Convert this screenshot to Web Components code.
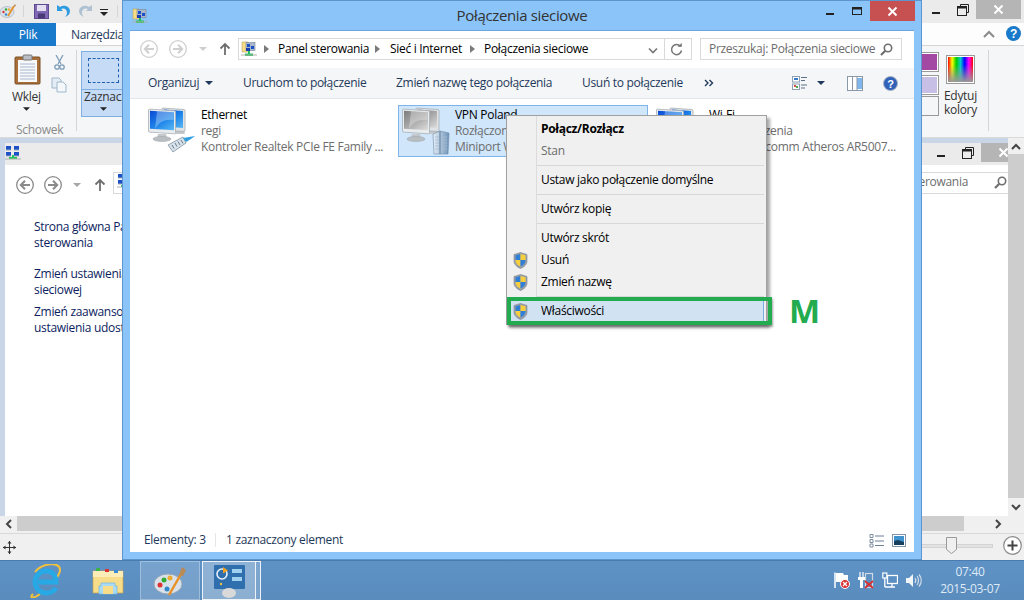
<!DOCTYPE html>
<html lang="pl"><head><meta charset="utf-8"><title>Połączenia sieciowe</title>
<style>html,body{margin:0;padding:0;overflow:hidden;background:#5f93c5}</style></head>
<body><x-desktop></x-desktop>
<script>
const FONT='"Open Sans","Noto Sans",sans-serif';
const base=`*{box-sizing:border-box}:host{font:12px/16px ${FONT};letter-spacing:-.3px}`;
function el(name,css,html){customElements.define(name,class extends HTMLElement{constructor(){super();const r=this.attachShadow({mode:'open'});r.innerHTML=`<style>${base}${css}</style>${typeof html==='function'?html(this):html}`;}});}

const I={
smallNet:(s=16)=>`<svg width="${s}" height="${s}" viewBox="0 0 16 16"><path d="M1 1h6l1 1v9H1z" fill="#f6dc86" stroke="#b9a45a" stroke-width=".6"/><rect x="5" y="1.500" width="9" height="8" fill="#a9b7c9" stroke="#77869a" stroke-width=".6"/><rect x="6" y="3" width="3" height="3" fill="#1c50c8"/><rect x="10" y="5" width="3" height="3" fill="#1c50c8"/><rect x="5" y="7" width="4" height="3" fill="#1a3fb0"/><path d="M7 10h2v2.500h3V15H4v-2.500h3z" fill="#22c25a"/><path d="M0 13.500h16v1H0z" fill="#aab0a8"/></svg>`,
gridNet:`<svg width="16" height="16" viewBox="0 0 16 16"><rect x="1" y="1" width="5" height="4" fill="#1c50c8"/><rect x="9" y="1" width="5" height="4" fill="#1c50c8"/><rect x="1" y="7" width="5" height="4" fill="#1c50c8"/><rect x="9" y="7" width="5" height="4" fill="#1c50c8"/><path d="M1 5h5M9 5h5M1 11h5M9 11h5" stroke="#9aa7b5"/><path d="M7 10h2v2h3v2H4v-2h3z" fill="#22c25a"/><path d="M0 13.500h16v1H0z" fill="#aab0a8"/></svg>`,
back:(c='#b5b5b5',a='#b5b5b5')=>`<svg width="18" height="18" viewBox="0 0 18 18"><circle cx="9" cy="9" r="8.300" fill="#fff" stroke="${c}" stroke-width="1.300"/><path d="M14 9H5.500M9 4.800 4.800 9 9 13.200" fill="none" stroke="${a}" stroke-width="2"/></svg>`,
fwd:(c='#b5b5b5',a='#b5b5b5')=>`<svg width="18" height="18" viewBox="0 0 18 18"><circle cx="9" cy="9" r="8.300" fill="#fff" stroke="${c}" stroke-width="1.300"/><path d="M4 9h8.500M9 4.800 13.200 9 9 13.200" fill="none" stroke="${a}" stroke-width="2"/></svg>`,
caret:(c='#a6a6a6',w=8,h=4)=>`<svg width="${w}" height="${h}" viewBox="0 0 8 4" style="display:block"><path d="M0 0h8L4 4z" fill="${c}"/></svg>`,
up:(c='#6e6e6e')=>`<svg width="14" height="14" viewBox="0 0 14 14"><path d="M7 13V2M2.500 6.500 7 2l4.500 4.500" fill="none" stroke="${c}" stroke-width="1.800"/></svg>`,
tri:`<svg width="5" height="8" viewBox="0 0 5 8"><path d="M0 0l5 4-5 4z" fill="#7a7a7a"/></svg>`,
mag:`<svg width="13" height="13" viewBox="0 0 13 13"><circle cx="8" cy="5" r="3.700" fill="none" stroke="#6f6f6f" stroke-width="1.600"/><path d="M5.300 7.700 1 12" stroke="#6f6f6f" stroke-width="2.200"/></svg>`,
shield:`<svg width="15" height="17" viewBox="0 0 15 17"><path d="M7.500.5 14 2.500V9c0 3.500-3 6-6.500 7.500C4 15 1 12.500 1 9V2.500z" fill="#9aa0a8" stroke="#7c8189" stroke-width=".6"/><path d="M7.500 2 7.500 8H2.500V3.300z" fill="#2f7fd6"/><path d="M7.500 2l5 1.300V8h-5z" fill="#f7cf3c"/><path d="M2.500 8h5v6.500C5 13.500 2.500 11.500 2.500 8z" fill="#f7cf3c"/><path d="M7.500 8h5c0 3.500-2.500 5.500-5 6.500z" fill="#2f7fd6"/></svg>`,
mon:(a)=>`<g><path d="M28 24h8l1 3H27z" fill="#c3c8cc"/><rect x="14" y="0" width="23" height="22" rx="1" transform="skewY(4)" fill="#dfe3e6" stroke="#a8b0b6" stroke-width=".8"/><rect x="16" y="1.500" width="19" height="17" transform="skewY(4)" fill="url(#${a})"/><rect x="0.500" y="2" width="27" height="23" rx="1" transform="skewY(4)" fill="#e9ecee" stroke="#aab2b8" stroke-width=".8"/><rect x="2" y="3.500" width="24" height="18" transform="skewY(4)" fill="url(#${a})"/><path d="M9 4 26 5.300 25.500 13C17 12 11 15 7 22z" fill="#fff" opacity=".3"/><path d="M10 27h8l1 4H9z" fill="#c3c8cc"/><ellipse cx="14" cy="32" rx="9" ry="2.500" fill="#b9bec2" stroke="#9aa0a5" stroke-width=".5"/></g>`,
eth:`<svg width="48" height="48" viewBox="0 0 48 48"><defs><linearGradient id="bl" x1="0" y1="0" x2="1" y2="1"><stop offset="0" stop-color="#0a48d4"/><stop offset=".55" stop-color="#1f86ea"/><stop offset="1" stop-color="#5cb8f4"/></linearGradient></defs>@M<path d="M20 38l15-8 3 6-13 9z" fill="#d8e2ea" stroke="#6f8494" stroke-width=".7"/><path d="M24 38l2 3.500M27 36l2 3.500M30 34.500l2 3.500M33 33l2 3.500" stroke="#5d7181" stroke-width=".9"/><path d="M35 31 47 29l-4 3-5 3z" fill="#2f9fe0"/></svg>`,
vpn:`<svg width="48" height="48" viewBox="0 0 48 48"><defs><linearGradient id="gr" x1="0" y1="0" x2="1" y2="1"><stop offset="0" stop-color="#7c7c7c"/><stop offset=".5" stop-color="#a8a8a8"/><stop offset="1" stop-color="#dedede"/></linearGradient><linearGradient id="tw" x1="0" x2="1"><stop offset="0" stop-color="#e8f0f7"/><stop offset="1" stop-color="#6f93b8"/></linearGradient></defs>@G<path d="M31 27l7-3 9 2-1 21H32z" fill="url(#tw)" stroke="#6e8aa8" stroke-width=".6"/><path d="M33 30h12M33 33h12M33 36h12M33 39h12M33 42h12" stroke="#a9bfd5" stroke-width=".8"/><path d="M38 24v23" stroke="#5f7f9f" stroke-width="1"/></svg>`,
wifi:`<svg width="48" height="48" viewBox="0 0 48 48"><defs><linearGradient id="wb" x1="0" y1="0" x2="1" y2="1"><stop offset="0" stop-color="#0a48d4"/><stop offset=".55" stop-color="#1f86ea"/><stop offset="1" stop-color="#5cb8f4"/></linearGradient></defs>@W</svg>`
};
I.eth=I.eth.replace('@M',I.mon('bl'));I.vpn=I.vpn.replace('@G',I.mon('gr'));I.wifi=I.wifi.replace('@W',I.mon('wb'));

/* connection item */
el('x-conn',`:host{display:flex;width:250px;height:52px;padding:1px 3px;border:1px solid transparent;gap:5px;color:#6d6d6d;white-space:nowrap;overflow:hidden}
:host([sel]){background:#cfe6fb;border-color:#7eb4ea}
.ic{width:48px;height:48px;flex:none}.t{display:flex;flex-direction:column}.n{color:#000}`,
h=>`<div class="ic">${I[h.getAttribute('icon')]}</div><div class="t"><span class="n">${h.getAttribute('n')}</span><span>${h.getAttribute('a')}</span><span>${h.getAttribute('b')}</span></div>`);

/* context menu */
el('x-menu',`:host{display:block;width:261px;background:linear-gradient(to right,#f0f0f0 29px,#dcdcdc 29px 30px,#f0f0f0 30px);border:1px solid #a0a0a0;padding:2px;box-shadow:3px 3px 3px rgba(0,0,0,.35);color:#000}`,`<slot></slot>`);
el('x-mi',`:host{display:flex;height:22px;align-items:center;position:relative}
.i{width:27px;height:22px;display:flex;align-items:center;justify-content:center;flex:none;padding-right:5px}
.l{padding-left:5px}
:host([b]) .l{font-weight:700}:host([dis]) .l{color:#6d6d6d}
:host([hot]){background:#d1e2f2;box-shadow:inset 0 0 0 1px #78aee5}`,
h=>`<div class="i">${h.hasAttribute('sh')?I.shield:''}</div><div class="l"><slot></slot></div>`);
el('x-msep',`:host{display:block;height:7px;padding:3px 0 3px 28px}div{height:1px;background:#d7d7d7}`,`<div></div>`);

/* caption buttons */
el('x-caps',`:host{display:flex;height:19px;align-items:stretch}
div{display:flex;align-items:center;justify-content:center}
.m{width:26px}.x{width:27px}.c{width:45px;background:var(--close,#b5b5b5)}`,
h=>`<div class="m"><svg width="10" height="10" viewBox="0 0 10 10"><rect x="1" y="7" width="8" height="2" fill="#222"/></svg></div>
<div class="x">${h.hasAttribute('max')?`<svg width="12" height="12" viewBox="0 0 12 12"><rect x="1.500" y="2.500" width="9" height="7" fill="none" stroke="#222"/><rect x="1.500" y="2.500" width="9" height="2" fill="#222"/></svg>`:`<svg width="12" height="12" viewBox="0 0 12 12"><path d="M3.500 2.500v-2h8v8h-2" fill="none" stroke="#222"/><rect x=".5" y="2.500" width="9" height="9" fill="none" stroke="#222"/><rect x=".5" y="2.500" width="9" height="2" fill="#222"/></svg>`}</div>
<div class="c"><svg width="11" height="11" viewBox="0 0 11 11"><path d="M1.500 1.500l8 8M9.500 1.500l-8 8" stroke="#fff" stroke-width="2"/></svg></div>`);

/* front explorer window */
el('x-explorer',`:host{display:flex;flex-direction:column;width:800px;height:560px;background:#8ac4f9;border:1px solid #5f95cf;color:#1e395b}
.title{height:29px;position:relative;display:flex;justify-content:center;align-items:flex-start;padding-top:4px;font-size:15px;line-height:20px;color:#333;letter-spacing:-.35px}
.ti{position:absolute;left:9px;top:7px}
x-caps{position:absolute;right:6px;top:0;--close:#c75050;height:20px}
.body{flex:1;margin:0 7px 7px 7px;background:#fff;display:flex;flex-direction:column;border-top:1px solid #6ea6df;min-height:0}
.nav{height:37px;display:flex;align-items:center;padding:0 0 1px 10px;flex:none}
.nav>*{flex:none}
.addr{margin-left:6px;width:454px;height:22px;border:1px solid #d9d9d9;display:flex;align-items:center;padding-left:2px;color:#000;position:relative}
.addr span{flex:none}
.sep{position:absolute;left:425px;top:0;bottom:0;width:1px;background:#d9d9d9}
.chev{position:absolute;left:409px;top:5px}.ref{position:absolute;left:431px;top:4px}
.srch{margin-left:8px;width:202px;height:22px;border:1px solid #d9d9d9;display:flex;align-items:center;padding-left:8px;color:#6d6d6d;position:relative;white-space:nowrap}
.srch svg{position:absolute;right:8px;top:4px}
.tb{height:31px;flex:none;background:#f5f6f7;border-bottom:1px solid #e3e5e8;display:flex;align-items:center;padding-left:18px;white-space:nowrap}
.tb>span{flex:none}
.ri{margin-left:auto;display:flex;align-items:center;padding-right:16px}
.list{flex:1;display:flex;gap:4px;padding:6px 0 0 14px;min-height:0}
.st{height:32px;flex:none;display:flex;align-items:center;padding:8px 8px 0 14px;position:relative}
.st .dv{width:1px;height:14px;background:#e6e6e6;margin:0 10px}
.st .rr{margin-left:auto;display:flex;gap:8px;align-items:center}`,
`<div class="title"><span class="ti">${I.smallNet()}</span>Połączenia sieciowe<x-caps red max></x-caps></div>
<div class="body">
<div class="nav">${I.back('#cfcfcf','#cfcfcf')}<span style="width:11px"></span>${I.fwd('#cfcfcf','#cfcfcf')}<span style="width:12px"></span>${I.caret('#cfcfcf')}<span style="width:11px"></span>${I.up()}
<div class="addr">${I.smallNet()}<span style="width:7px"></span>${I.tri}<span style="width:9px"></span><span style="width:97px">Panel sterowania</span>${I.tri}<span style="width:10px"></span><span style="width:80px">Sieć i Internet</span>${I.tri}<span style="width:9px"></span><span>Połączenia sieciowe</span>
<span class="chev"><svg width="10" height="10" viewBox="0 0 10 10"><path d="M1 2.500 5 6.500l4-4" fill="none" stroke="#777" stroke-width="1.600"/></svg></span><span class="sep"></span>
<span class="ref"><svg width="13" height="13" viewBox="0 0 13 13"><path d="M10.500 3.500a5 5 0 1 0 1 4" fill="none" stroke="#777" stroke-width="1.500"/><path d="M7.500 3.800h4.300V0z" fill="#777"/></svg></span></div>
<div class="srch">Przeszukaj: Połączenia sieciowe${I.mag}</div></div>
<div class="tb"><span style="width:57px">Organizuj</span>${I.caret('#1e395b')}<span style="width:30px"></span><span style="width:153px">Uruchom to połączenie</span><span style="width:186px">Zmień nazwę tego połączenia</span><span style="width:122px">Usuń to połączenie</span>
<svg width="10" height="8" viewBox="0 0 10 8"><path d="M1 1l3 3-3 3M5.500 1l3 3-3 3" fill="none" stroke="#1e395b" stroke-width="1.400"/></svg>
<div class="ri"><svg width="16" height="16" viewBox="0 0 16 16"><rect x=".5" y="1.500" width="7" height="5.500" fill="#fff" stroke="#8ea0b4"/><rect x="2" y="3" width="4" height="2" fill="#3a78c8"/><rect x=".5" y="9" width="7" height="5.500" fill="#fff" stroke="#8ea0b4"/><rect x="2" y="10" width="2" height="2" fill="#d44"/><rect x="4" y="11" width="2" height="2" fill="#4a4"/><path d="M9 2.500h6M9 5.500h4M9 10h6M9 13h4" stroke="#5c7087"/></svg><span style="width:9px"></span>${I.caret('#1e395b')}<span style="width:22px"></span>
<svg width="16" height="15" viewBox="0 0 16 15"><rect x=".5" y=".5" width="15" height="14" fill="#fff" stroke="#8a98a8"/><rect x="10" y="2" width="5" height="11" fill="#7db7ee"/><path d="M5.500 .5v14M10 .5v14" stroke="#8a98a8"/></svg><span style="width:20px"></span>
<svg width="15" height="15" viewBox="0 0 15 15"><circle cx="7.500" cy="7.500" r="7" fill="#2f62b8" stroke="#a9b4c2"/><text x="7.500" y="11.500" text-anchor="middle" font-size="11" font-weight="700" font-family="Liberation Sans" fill="#fff">?</text></svg></div></div>
<div class="list"><x-conn icon="eth" n="Ethernet" a="regi" b="Kontroler Realtek PCIe FE Family ..."></x-conn>
<x-conn sel icon="vpn" n="VPN Poland" a="Rozłączono" b="Miniport WAN (PPTP)"></x-conn>
<x-conn icon="wifi" n="Wi-Fi" a="Brak połączenia" b="Karta Qualcomm Atheros AR5007..."></x-conn></div>
<div class="st"><span style="width:61px;white-space:nowrap">Elementy: 3</span><span class="dv"></span><span>1 zaznaczony element</span>
<div class="rr"><svg width="15" height="15" viewBox="0 0 15 15"><path d="M1 1.500h3v3H1zM1 6.500h3v3H1zM1 11h3v3H1z" fill="#fff" stroke="#7d8d9e"/><path d="M6 3h9M6 8h9M6 12.500h9" stroke="#6c7f93"/></svg><svg width="14" height="13" viewBox="0 0 14 13"><rect x=".5" y=".5" width="13" height="12" fill="#fff" stroke="#8296aa"/><rect x="2" y="2" width="10" height="9" fill="#3f93cf"/><path d="M2 7l4-1 6 2v3H2z" fill="#173f5e"/></svg></div></div>
</div>`);

/* back control panel window */
el('x-netwin',`:host{display:flex;flex-direction:column;background:#fff;height:100%;color:#0c1d60}
.t{height:22px;background:#ebebeb;position:relative;flex:none;padding-top:2px}
x-caps{position:absolute;right:-18px;top:0;--close:#b5b5b5}
.n{height:31px;display:flex;align-items:center;padding-left:11px;flex:none;position:relative;top:4px}
.n>*{flex:none}
.ad{position:absolute;left:108px;top:3px;right:0;height:22px;border:1px solid #d9d9d9;border-right:0;padding-left:3px}
.s{position:absolute;right:0;top:0;width:300px;height:20px;color:#6d6d6d;padding:1px 40px 0 0;white-space:nowrap;text-align:right}
.s svg{position:absolute;right:1px;top:3px}
.side{padding:23px 0 0 29px;width:120px;white-space:nowrap}
p{margin:0}`,
`<div class="t">${I.gridNet}<x-caps></x-caps></div>
<div class="n">${I.back('#8a8a8a','#8a8a8a')}<span style="width:10px"></span>${I.fwd('#8a8a8a','#8a8a8a')}<span style="width:11px"></span>${I.caret('#a6a6a6')}<span style="width:12px"></span>${I.up()}
<div class="ad">${I.gridNet}<div class="s">Przeszukaj: Panel sterowania${I.mag}</div></div></div>
<div class="side"><p style="margin-bottom:15px">Strona główna Panelu<br>sterowania</p><p style="margin-bottom:6px">Zmień ustawienia karty<br>sieciowej</p><p>Zmień zaawansowane<br>ustawienia udostępniania</p></div>`);

/* paint window */
el('x-paint',`:host{display:flex;flex-direction:column;width:1024px;height:560px;background:#f0f0f0;color:#333}
.q{height:23px;background:#ebebeb;display:flex;align-items:center;position:relative;flex:none}
.q>*{position:absolute}
x-caps{right:3px;top:0}
.tabs{height:23px;background:#fdfdfd;border-bottom:1px solid #d5d5d5;display:flex;flex:none;position:relative}
.plik{width:56px;background:#1979ca;color:#fff;text-align:center;line-height:23px;margin-bottom:-1px}
.nz{padding:4px 0 0 15px;color:#1e395b}
.tr{position:absolute;right:3px;top:3px;display:flex;align-items:center;gap:11px}
.rib{height:92px;background:#f5f6f7;position:relative;flex:none;border-bottom:1px solid #dadada;overflow:hidden}
.rib>*{position:absolute}
.mid{flex:1;display:flex;min-height:0}
.can{flex:1;background:#c9d6e8;padding:5px 0 0 5px;min-width:0;overflow:hidden}
.vs{width:16px;background:#f0f0f0;display:flex;flex-direction:column;flex:none}
.vs .b{height:16px;display:flex;align-items:center;justify-content:center;flex:none}
.vs .th{flex:1;background:#cdcdcd;margin-bottom:18px}
.hs{height:15px;background:#f0f0f0;display:flex;align-items:center;flex:none}
.hs .l{width:17px;text-align:center;display:flex;justify-content:center}.hs .th{width:947px;height:15px;background:#cdcdcd}
.hs .r{width:60px;display:flex;justify-content:flex-end;padding-right:22px}
.sb{height:27px;margin-top:2px;background:#f0f0f0;border-top:1px solid #d9d9d9;position:relative;flex:none;display:flex;align-items:center;padding-left:3px}
.sl{position:absolute;left:914px;top:10px;width:79px;height:4px;background:#e3e3e3;border:1px solid #d3d3d3}
.kn{position:absolute;left:946px;top:3px}
.pl{position:absolute;left:1003px;top:2px}
.sep{width:1px;background:#d5d5d5}
.sw{border:1px solid #9a9a9a;padding:1px;background:#fff;width:20px;height:20px}
.sw i{display:block;width:100%;height:100%}
.c{text-align:center;color:#333}`,
`<div class="q"><svg style="left:0;top:3px" width="17" height="16" viewBox="0 0 17 16"><ellipse cx="7" cy="9" rx="7" ry="5.500" fill="#d9e2ea" stroke="#9aa8b5" stroke-width=".6"/><circle cx="3.500" cy="9" r="1.200" fill="#d33"/><circle cx="6" cy="6.500" r="1.200" fill="#3a3"/><circle cx="9" cy="6.500" r="1.200" fill="#ea3"/><circle cx="6" cy="11.500" r="1.200" fill="#38c"/><path d="M8 13 14 3" stroke="#e8912a" stroke-width="1.800"/><path d="M13 4l2-3 1 2z" fill="#b98a55"/></svg>
<div class="sep" style="left:23px;top:5px;height:12px"></div>
<svg style="left:34px;top:4px" width="15" height="15" viewBox="0 0 15 15"><rect x=".5" y=".5" width="14" height="14" fill="#8068b4" stroke="#5f4a92"/><rect x="3" y="1" width="9" height="6" fill="#e3def0"/><rect x="4" y="9.500" width="7" height="5" fill="#4a3a78"/></svg>
<svg style="left:56px;top:4px" width="15" height="15" viewBox="0 0 15 15"><path d="M1 1v6h6L5 5c3-1.500 6 0 6 4 0 1.500-1 3-2 4 3-1 5-3 5-6C14 2.500 8 0 4 3z" fill="#2d9be0"/></svg>
<svg style="left:78px;top:4px" width="15" height="15" viewBox="0 0 15 15"><path d="M14 1v6H8l2-2C7 3.500 4 5 4 9c0 1.500 1 3 2 4-3-1-5-3-5-6C1 2.500 7 0 11 3z" fill="#aec2d3"/></svg>
<svg style="left:100px;top:9px" width="8" height="7" viewBox="0 0 8 7"><path d="M0 0h8v1H0zM0 3h8L4 7z" fill="#222"/></svg>
<div class="sep" style="left:117px;top:5px;height:12px"></div><x-caps></x-caps></div>
<div class="tabs"><div class="plik">Plik</div><div class="nz">Narzędzia</div>
<div class="tr"><svg width="12" height="8" viewBox="0 0 12 8"><path d="M1 7l5-5 5 5" fill="none" stroke="#8a8a8a" stroke-width="2"/></svg><svg width="15" height="15" viewBox="0 0 15 15"><circle cx="7.500" cy="7.500" r="7.500" fill="#1979ca"/><text x="7.500" y="12" text-anchor="middle" font-size="12" font-weight="700" font-family="Liberation Sans" fill="#fff">?</text></svg></div></div>
<div class="rib">
<svg style="left:14px;top:8px" width="27" height="31" viewBox="0 0 27 31"><rect x="1" y="3" width="25" height="27" rx="1" fill="#a86f3a" stroke="#7a5025"/><rect x="4" y="6" width="19" height="22" fill="#f7f8fa"/><path d="M6 10h15M6 13h15M6 16h15M6 19h15M6 22h15M6 25h15" stroke="#a9b8d0"/><rect x="9" y="1" width="9" height="5" rx="1" fill="#b9bec4" stroke="#777"/></svg>
<svg style="left:54px;top:9px" width="11" height="15" viewBox="0 0 11 15"><path d="M2 0l5 9M9 0 4 9" stroke="#7d9db8" stroke-width="1.300"/><circle cx="3" cy="12" r="2.200" fill="none" stroke="#7d9db8" stroke-width="1.300"/><circle cx="8" cy="12" r="2.200" fill="none" stroke="#7d9db8" stroke-width="1.300"/></svg>
<svg style="left:51px;top:31px" width="16" height="16" viewBox="0 0 16 16"><path d="M1 1h7l2 2v8H1z" fill="#e4edf5" stroke="#9fb6cb"/><path d="M6 5h6l3 3v7H6z" fill="#f4f8fb" stroke="#9fb6cb"/></svg>
<span class="c" style="left:12px;top:43px">Wklej</span>
<span style="left:23px;top:61px">${I.caret('#222',7,4)}</span>
<span style="left:16px;top:76px;color:#8b8b8b">Schowek</span>
<div class="sep" style="left:76px;top:4px;height:81px"></div>
<div style="left:81px;top:5px;width:60px;height:66px;background:#c5dbf6;border:1px solid #7faee0"><div style="position:absolute;left:6px;top:6px;width:31px;height:25px;border:1px dashed #1f5fb0"></div><div style="position:absolute;left:0;right:0;top:37px;height:1px;background:#7faee0"></div><span style="position:absolute;left:2px;top:37px">Zaznacz</span><span style="position:absolute;left:18px;top:55px">${I.caret('#222',7,4)}</span></div>
<div class="sw" style="left:917px;top:6px;width:22px"><i style="background:#a349a4"></i></div>
<div class="sw" style="left:917px;top:29px;width:22px"><i style="background:#c8bfe7"></i></div>
<div class="sw" style="left:917px;top:50px;width:22px;background:#f5f6f7"></div>
<div style="left:946px;top:9px;width:29px;height:29px;border:1px solid #9a9a9a;padding:1px;background:#fff"><i style="display:block;width:100%;height:100%;background:linear-gradient(to bottom,transparent 30%,#999 100%),linear-gradient(to right,#f00,#ff0,#0c0,#0cc,#00f,#f0f,#f00)"></i></div>
<span style="left:944px;top:42px">Edytuj</span><span style="left:944px;top:56px">kolory</span>
<div class="sep" style="left:988px;top:4px;height:81px"></div></div>
<div class="mid"><div class="can"><x-netwin></x-netwin></div>
<div class="vs"><div class="b"><svg width="10" height="7" viewBox="0 0 10 7"><path d="M1 6l4-4 4 4" fill="none" stroke="#444" stroke-width="2"/></svg></div><div class="th"></div><div class="b" style="margin-top:-18px;height:18px"><svg width="10" height="7" viewBox="0 0 10 7"><path d="M1 1l4 4 4-4" fill="none" stroke="#444" stroke-width="2"/></svg></div></div></div>
<div class="hs"><div class="l"><svg width="7" height="10" viewBox="0 0 7 10"><path d="M6 1 2 5l4 4" fill="none" stroke="#444" stroke-width="2"/></svg></div><div class="th"></div><div class="r"><svg width="7" height="10" viewBox="0 0 7 10"><path d="M1 1l4 4-4 4" fill="none" stroke="#444" stroke-width="2"/></svg></div></div>
<div class="sb"><svg width="13" height="13" viewBox="0 0 13 13"><path d="M6.500 0v13M0 6.500h13" stroke="#333"/><path d="M6.500 0l2 2.500h-4zM6.500 13l2-2.500h-4zM0 6.500 2.500 4.500v4zM13 6.500l-2.500-2v4z" fill="#333"/></svg>
<div class="sl"></div><svg class="kn" width="11" height="17" viewBox="0 0 11 17"><path d="M.5.5h10v12l-5 4-5-4z" fill="#f0f0f0" stroke="#9a9a9a"/></svg>
<svg class="pl" width="19" height="19" viewBox="0 0 19 19"><circle cx="9.500" cy="9.500" r="8.800" fill="#fff" stroke="#8a8a8a" stroke-width="1.200"/><path d="M9.500 4.500v10M4.500 9.500h10" stroke="#444" stroke-width="2"/></svg></div>`);

/* taskbar */
el('x-taskbar',`:host{display:flex;height:40px;width:1024px;background:linear-gradient(#5e92c6,#5a8cbd);border-top:1px solid #4a7caf;align-items:stretch;color:#fff;position:relative}
.it{display:flex;align-items:center;justify-content:center;flex:none}
.b{border:1px solid rgba(255,255,255,.3);background:rgba(255,255,255,.16)}
.a{border:1px solid rgba(255,255,255,.85);background:rgba(255,255,255,.3)}
.tray{margin-left:auto;display:flex;align-items:center;gap:8px;padding-right:14px}
.tray>svg{flex:none}
.clk{width:80px;text-align:center;color:#dfeaf6;line-height:17px;margin-top:-2px;white-space:nowrap}`,
`<div class="it" style="width:92px"><svg width="32" height="34" viewBox="0 0 32 34"><path d="M3 30c-5 5 2 4 7 0M5 8C12-1 30-3 30 6c0 3-2 6-4 9" fill="none" stroke="#f2c23a" stroke-width="2"/><path d="M8 18h18c0-7-4-11-10-11S5 12 5 18s5 11 11 11c4 0 8-2 10-5" fill="none" stroke="#27a9e6" stroke-width="4.800"/></svg></div>
<div class="it" style="width:32px"><svg width="32" height="30" viewBox="0 0 32 30"><path d="M1 5h30v22H1z" fill="#f7dc8a" stroke="#c5a552" stroke-width=".7"/><path d="M1 5h30v6H1z" fill="#fbecb8"/><rect x="4" y="2" width="4" height="3" fill="#3bb34a"/><rect x="13" y="3" width="4" height="3" fill="#d33"/><rect x="22" y="4" width="4" height="3" fill="#3a8ad8"/><path d="M9 17h14v3h2v8H7v-8h2z" fill="#a9dcf4" stroke="#6eb4d8" stroke-width=".7"/><path d="M11 20h10v8H11z" fill="#f7dc8a"/></svg></div>
<div style="width:16px"></div>
<div class="it b" style="width:60px"><svg width="34" height="30" viewBox="0 0 34 30"><ellipse cx="15" cy="18" rx="14" ry="10" fill="#d9e2ea" stroke="#98a8b8"/><circle cx="7" cy="19" r="2.500" fill="#d33"/><circle cx="11" cy="14" r="2.500" fill="#3a3"/><circle cx="17" cy="12" r="2.500" fill="#ea3"/><circle cx="14" cy="23" r="2.500" fill="#38c"/><path d="M16 29 28 8" stroke="#e8912a" stroke-width="2.500"/><path d="M26 9l3-8 4 3-3 6z" fill="#b98a55"/></svg></div>
<div style="width:2px"></div>
<div class="it a" style="width:54px"><svg width="32" height="34" viewBox="0 0 32 34"><rect x="1" y="1" width="31" height="24" rx="1" fill="#2f6fae"/><circle cx="9" cy="10" r="5" fill="none" stroke="#e9f2fa" stroke-width="1.600"/><path d="M10 3l5 3.500-5 3z" fill="#f0a020"/><rect x="19" y="5" width="10" height="4" fill="#9fd0f0"/><rect x="19" y="13" width="10" height="4" fill="#9fd0f0"/><circle cx="8" cy="20" r="1.200" fill="#f0c040"/><ellipse cx="16" cy="29" rx="7" ry="5" fill="#d9d9d9"/></svg></div>
<div class="it a" style="width:5px;border-left:0;background:rgba(255,255,255,.2)"></div>
<div class="tray">
<svg width="16" height="17" viewBox="0 0 16 17"><path d="M1 .5V16" stroke="#fff" stroke-width="1.500"/><path d="M2 1h7l1 2h4v7H2z" fill="#fff"/><circle cx="11" cy="12" r="4.500" fill="#d83030" stroke="#fff"/><path d="M9 10l4 4M13 10l-4 4" stroke="#fff" stroke-width="1.300"/></svg>
<svg width="16" height="17" viewBox="0 0 16 17"><path d="M2 0v5M5 0v5" stroke="#fff" stroke-width="1.200"/><path d="M0 5h7v3H5v8H2V8H0z" fill="#fff"/><rect x="7.500" y="1.500" width="7" height="14" fill="none" stroke="#cfd9e3" stroke-width="1.200"/><path d="M7 9l8 7M15 9l-8 7" stroke="#d83030" stroke-width="1.800"/></svg>
<svg width="16" height="17" viewBox="0 0 16 17"><rect x="5.500" y="3.500" width="10" height="8" fill="none" stroke="#fff" stroke-width="1.300"/><rect x=".8" y="1" width="4" height="5" fill="#5a8cbd" stroke="#fff" stroke-width="1.200"/><path d="M2.800 6v9M2.800 15H13M10 11.500V15" stroke="#fff" stroke-width="1.300" fill="none"/></svg>
<svg width="16" height="17" viewBox="0 0 16 17"><path d="M0 6h3l4-4v13l-4-4H0z" fill="#f2f5f8"/><path d="M9 6c1 1.500 1 3.500 0 5M11 4c2 2.500 2 6.500 0 9M13 2.500c3 3.500 3 8.500 0 12" fill="none" stroke="#cfdbe7" stroke-width="1.200"/></svg>
<div class="clk">07:40<br>2015-03-07</div></div>`);

/* desktop */
el('x-desktop',`:host{display:block;position:relative;width:1024px;height:600px;overflow:hidden;background:#5f93c5}
x-explorer{position:absolute;left:122px;top:0}
x-menu{position:absolute;left:506px;top:115px}
.hl{position:absolute;left:507px;top:297px;width:265px;height:28px;border:4px solid #22ac4f;box-shadow:1px 2px 2px rgba(0,0,0,.35)}
.m{position:absolute;left:789px;top:290px;font:700 33px/42px "Open Sans",sans-serif;color:#22ac4f;letter-spacing:0}`,
`<x-paint></x-paint><x-taskbar></x-taskbar><x-explorer></x-explorer>
<x-menu><x-mi b>Połącz/Rozłącz</x-mi><x-mi dis>Stan</x-mi><x-msep></x-msep><x-mi>Ustaw jako połączenie domyślne</x-mi><x-msep></x-msep><x-mi>Utwórz kopię</x-mi><x-msep></x-msep><x-mi>Utwórz skrót</x-mi><x-mi sh>Usuń</x-mi><x-mi sh>Zmień nazwę</x-mi><x-msep></x-msep><x-mi sh hot>Właściwości</x-mi></x-menu>
<div class="hl"></div><div class="m">M</div>`);
</script></body></html>
